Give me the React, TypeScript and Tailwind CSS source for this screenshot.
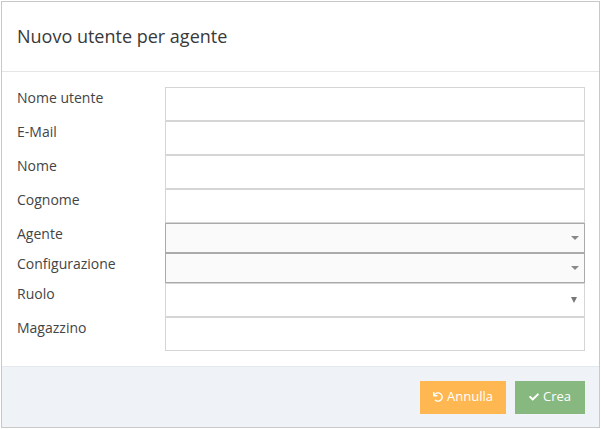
import React from "react";
import { FaUndo, FaCheck } from "react-icons/fa";

type Field = { label: string; kind: "input" | "chosen" | "select"; h: string };

const fields: Field[] = [
    { label: "Nome utente", kind: "input", h: "h-[34px]" },
    { label: "E-Mail", kind: "input", h: "h-[34px]" },
    { label: "Nome", kind: "input", h: "h-[34px]" },
    { label: "Cognome", kind: "input", h: "h-[34px]" },
    { label: "Agente", kind: "chosen", h: "h-[30px]" },
    { label: "Configurazione", kind: "chosen", h: "h-[30px]" },
    { label: "Ruolo", kind: "select", h: "h-[34px]" },
    { label: "Magazzino", kind: "input", h: "h-[34px]" },
];

function Control({ f }: { f: Field }) {
    if (f.kind === "chosen") {
        return (
            <div className="relative h-full w-[420px] border border-[#aaa] bg-[#fafafa]">
                <svg width="8" height="4" viewBox="0 0 8 4" className="absolute right-[5px] top-1/2 -translate-y-1/2">
                    <path d="M0 0 L8 0 L4 4 Z" fill="#888" />
                </svg>
            </div>
        );
    }
    if (f.kind === "select") {
        return (
            <div className="relative h-full w-[420px] border border-[#d5d5d5] bg-white">
                <svg width="6" height="6" viewBox="0 0 6 6" className="absolute right-[7px] top-1/2 -translate-y-1/2">
                    <path d="M0 0 L6 0 L3 6 Z" fill="#777" />
                </svg>
            </div>
        );
    }
    return <div className="h-full w-[420px] border border-[#d5d5d5] bg-white" />;
}

export default function App() {
    return (
        <div className="h-[429px] w-[601px] bg-white pl-px pt-px font-['Open_Sans',sans-serif]">
            <div className="flex h-[427px] w-[599px] flex-col border border-[#c8c8c8] bg-white">
                <div className="flex h-[70px] items-center border-b border-[#e5e5e5] px-[15px]">
                    <h4 className="text-[18px] text-[#393939]">Nuovo utente per agente</h4>
                </div>
                <div className="flex flex-1 flex-col pt-[15px]">
                    {fields.map((f) => (
                        <div key={f.label} className={`flex ${f.h}`}>
                            <div className="w-[163px] pl-[15px] pt-px text-[14px] leading-[20px] text-[#444]">{f.label}</div>
                            <Control f={f} />
                        </div>
                    ))}
                </div>
                <div className="flex h-[61px] items-center justify-end gap-[9px] border-t border-[#e4e9ee] bg-[#eff3f8] pr-[14px]">
                    <button className="flex h-[33px] w-[86px] items-center justify-center gap-[4px] bg-[#ffb752] text-[13px] text-white">
                        <FaUndo size={10} />
                        Annulla
                    </button>
                    <button className="flex h-[33px] w-[70px] items-center justify-center gap-[4px] bg-[#87b87f] text-[13px] text-white">
                        <FaCheck size={10} />
                        Crea
                    </button>
                </div>
            </div>
        </div>
    );
}
